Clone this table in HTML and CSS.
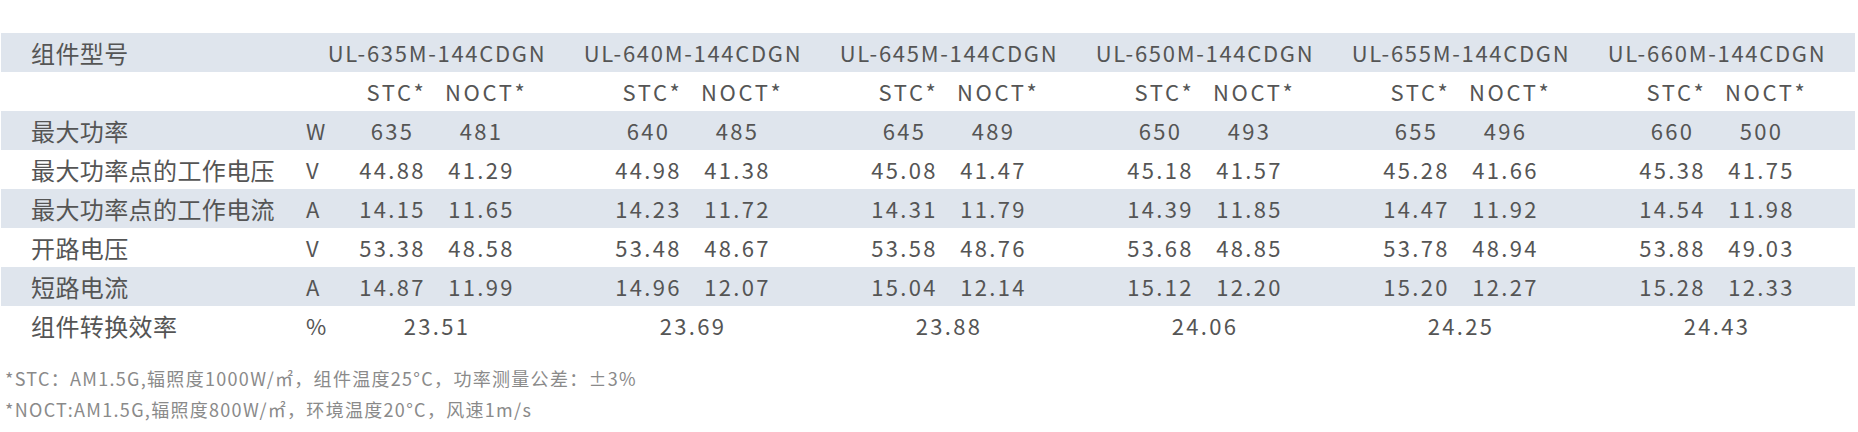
FILE: index.html
```html
<!DOCTYPE html>
<html lang="zh-CN">
<head>
<meta charset="utf-8">
<link rel="stylesheet" href="styles.css">
</head>
<body>
<div class="page">
  <div class="table">
    <div class="row shade">
      <div class="label">组件型号</div><div class="unit"></div>
      <div class="group"><span class="span2 model">UL-635M-144CDGN</span></div>
      <div class="group"><span class="span2 model">UL-640M-144CDGN</span></div>
      <div class="group"><span class="span2 model">UL-645M-144CDGN</span></div>
      <div class="group"><span class="span2 model">UL-650M-144CDGN</span></div>
      <div class="group"><span class="span2 model">UL-655M-144CDGN</span></div>
      <div class="group"><span class="span2 model">UL-660M-144CDGN</span></div>
    </div>
    <div class="row">
      <div class="label"></div><div class="unit"></div>
      <div class="group"><span class="cell head">STC*</span><span class="cell head">NOCT*</span></div>
      <div class="group"><span class="cell head">STC*</span><span class="cell head">NOCT*</span></div>
      <div class="group"><span class="cell head">STC*</span><span class="cell head">NOCT*</span></div>
      <div class="group"><span class="cell head">STC*</span><span class="cell head">NOCT*</span></div>
      <div class="group"><span class="cell head">STC*</span><span class="cell head">NOCT*</span></div>
      <div class="group"><span class="cell head">STC*</span><span class="cell head">NOCT*</span></div>
    </div>
    <div class="row shade">
      <div class="label">最大功率</div><div class="unit">W</div>
      <div class="group"><span class="cell">635</span><span class="cell">481</span></div>
      <div class="group"><span class="cell">640</span><span class="cell">485</span></div>
      <div class="group"><span class="cell">645</span><span class="cell">489</span></div>
      <div class="group"><span class="cell">650</span><span class="cell">493</span></div>
      <div class="group"><span class="cell">655</span><span class="cell">496</span></div>
      <div class="group"><span class="cell">660</span><span class="cell">500</span></div>
    </div>
    <div class="row">
      <div class="label">最大功率点的工作电压</div><div class="unit">V</div>
      <div class="group"><span class="cell">44.88</span><span class="cell">41.29</span></div>
      <div class="group"><span class="cell">44.98</span><span class="cell">41.38</span></div>
      <div class="group"><span class="cell">45.08</span><span class="cell">41.47</span></div>
      <div class="group"><span class="cell">45.18</span><span class="cell">41.57</span></div>
      <div class="group"><span class="cell">45.28</span><span class="cell">41.66</span></div>
      <div class="group"><span class="cell">45.38</span><span class="cell">41.75</span></div>
    </div>
    <div class="row shade">
      <div class="label">最大功率点的工作电流</div><div class="unit">A</div>
      <div class="group"><span class="cell">14.15</span><span class="cell">11.65</span></div>
      <div class="group"><span class="cell">14.23</span><span class="cell">11.72</span></div>
      <div class="group"><span class="cell">14.31</span><span class="cell">11.79</span></div>
      <div class="group"><span class="cell">14.39</span><span class="cell">11.85</span></div>
      <div class="group"><span class="cell">14.47</span><span class="cell">11.92</span></div>
      <div class="group"><span class="cell">14.54</span><span class="cell">11.98</span></div>
    </div>
    <div class="row">
      <div class="label">开路电压</div><div class="unit">V</div>
      <div class="group"><span class="cell">53.38</span><span class="cell">48.58</span></div>
      <div class="group"><span class="cell">53.48</span><span class="cell">48.67</span></div>
      <div class="group"><span class="cell">53.58</span><span class="cell">48.76</span></div>
      <div class="group"><span class="cell">53.68</span><span class="cell">48.85</span></div>
      <div class="group"><span class="cell">53.78</span><span class="cell">48.94</span></div>
      <div class="group"><span class="cell">53.88</span><span class="cell">49.03</span></div>
    </div>
    <div class="row shade">
      <div class="label">短路电流</div><div class="unit">A</div>
      <div class="group"><span class="cell">14.87</span><span class="cell">11.99</span></div>
      <div class="group"><span class="cell">14.96</span><span class="cell">12.07</span></div>
      <div class="group"><span class="cell">15.04</span><span class="cell">12.14</span></div>
      <div class="group"><span class="cell">15.12</span><span class="cell">12.20</span></div>
      <div class="group"><span class="cell">15.20</span><span class="cell">12.27</span></div>
      <div class="group"><span class="cell">15.28</span><span class="cell">12.33</span></div>
    </div>
    <div class="row">
      <div class="label">组件转换效率</div><div class="unit">%</div>
      <div class="group"><span class="span2">23.51</span></div>
      <div class="group"><span class="span2">23.69</span></div>
      <div class="group"><span class="span2">23.88</span></div>
      <div class="group"><span class="span2">24.06</span></div>
      <div class="group"><span class="span2">24.25</span></div>
      <div class="group"><span class="span2">24.43</span></div>
    </div>
  </div>
  <div class="notes">
    <p>*STC：AM1.5G,辐照度1000W/㎡，组件温度25°C，功率测量公差：±3%</p>
    <p>*NOCT:AM1.5G,辐照度800W/㎡，环境温度20°C，风速1m/s</p>
  </div>
</div>
</body>
</html>
```
FILE: styles.css
```css
html, body {
  margin: 0;
  padding: 0;
  background: #ffffff;
}
body {
  font-family: "Noto Sans CJK SC", "Noto Sans", sans-serif;
  font-weight: 400;
  color: #555555;
}
.page {
  padding: 33px 3px 0 1px;
}
.table {
  display: flex;
  flex-direction: column;
}
.row {
  display: flex;
  align-items: center;
  height: 39px;
  font-size: 22px;
  letter-spacing: 2.3px;
  line-height: 39px;
}
.row.shade {
  background: #dfe5ed;
}
.label {
  width: 305px;
  padding-left: 30px;
  box-sizing: border-box;
  white-space: nowrap;
  flex: none;
  font-size: 24px;
  letter-spacing: 0.4px;
}
.unit {
  width: 42px;
  flex: none;
}
.group {
  width: 178px;
  margin-right: 78px;
  display: flex;
  justify-content: center;
  flex: none;
}
.group:last-child {
  margin-right: 0;
}
.cell {
  width: 89px;
  text-align: center;
  white-space: nowrap;
  flex: none;
}
.cell.head {
  box-sizing: border-box;
  padding-left: 8px;
  letter-spacing: 2.6px;
}
.span2 {
  white-space: nowrap;
}
.span2.model {
  letter-spacing: 1.7px;
}
.notes {
  margin-top: 18px;
  padding-left: 4px;
  color: #8a8a8a;
  font-size: 18px;
  letter-spacing: 1.3px;
}
.notes p {
  margin: 0;
  line-height: 31px;
}
```
